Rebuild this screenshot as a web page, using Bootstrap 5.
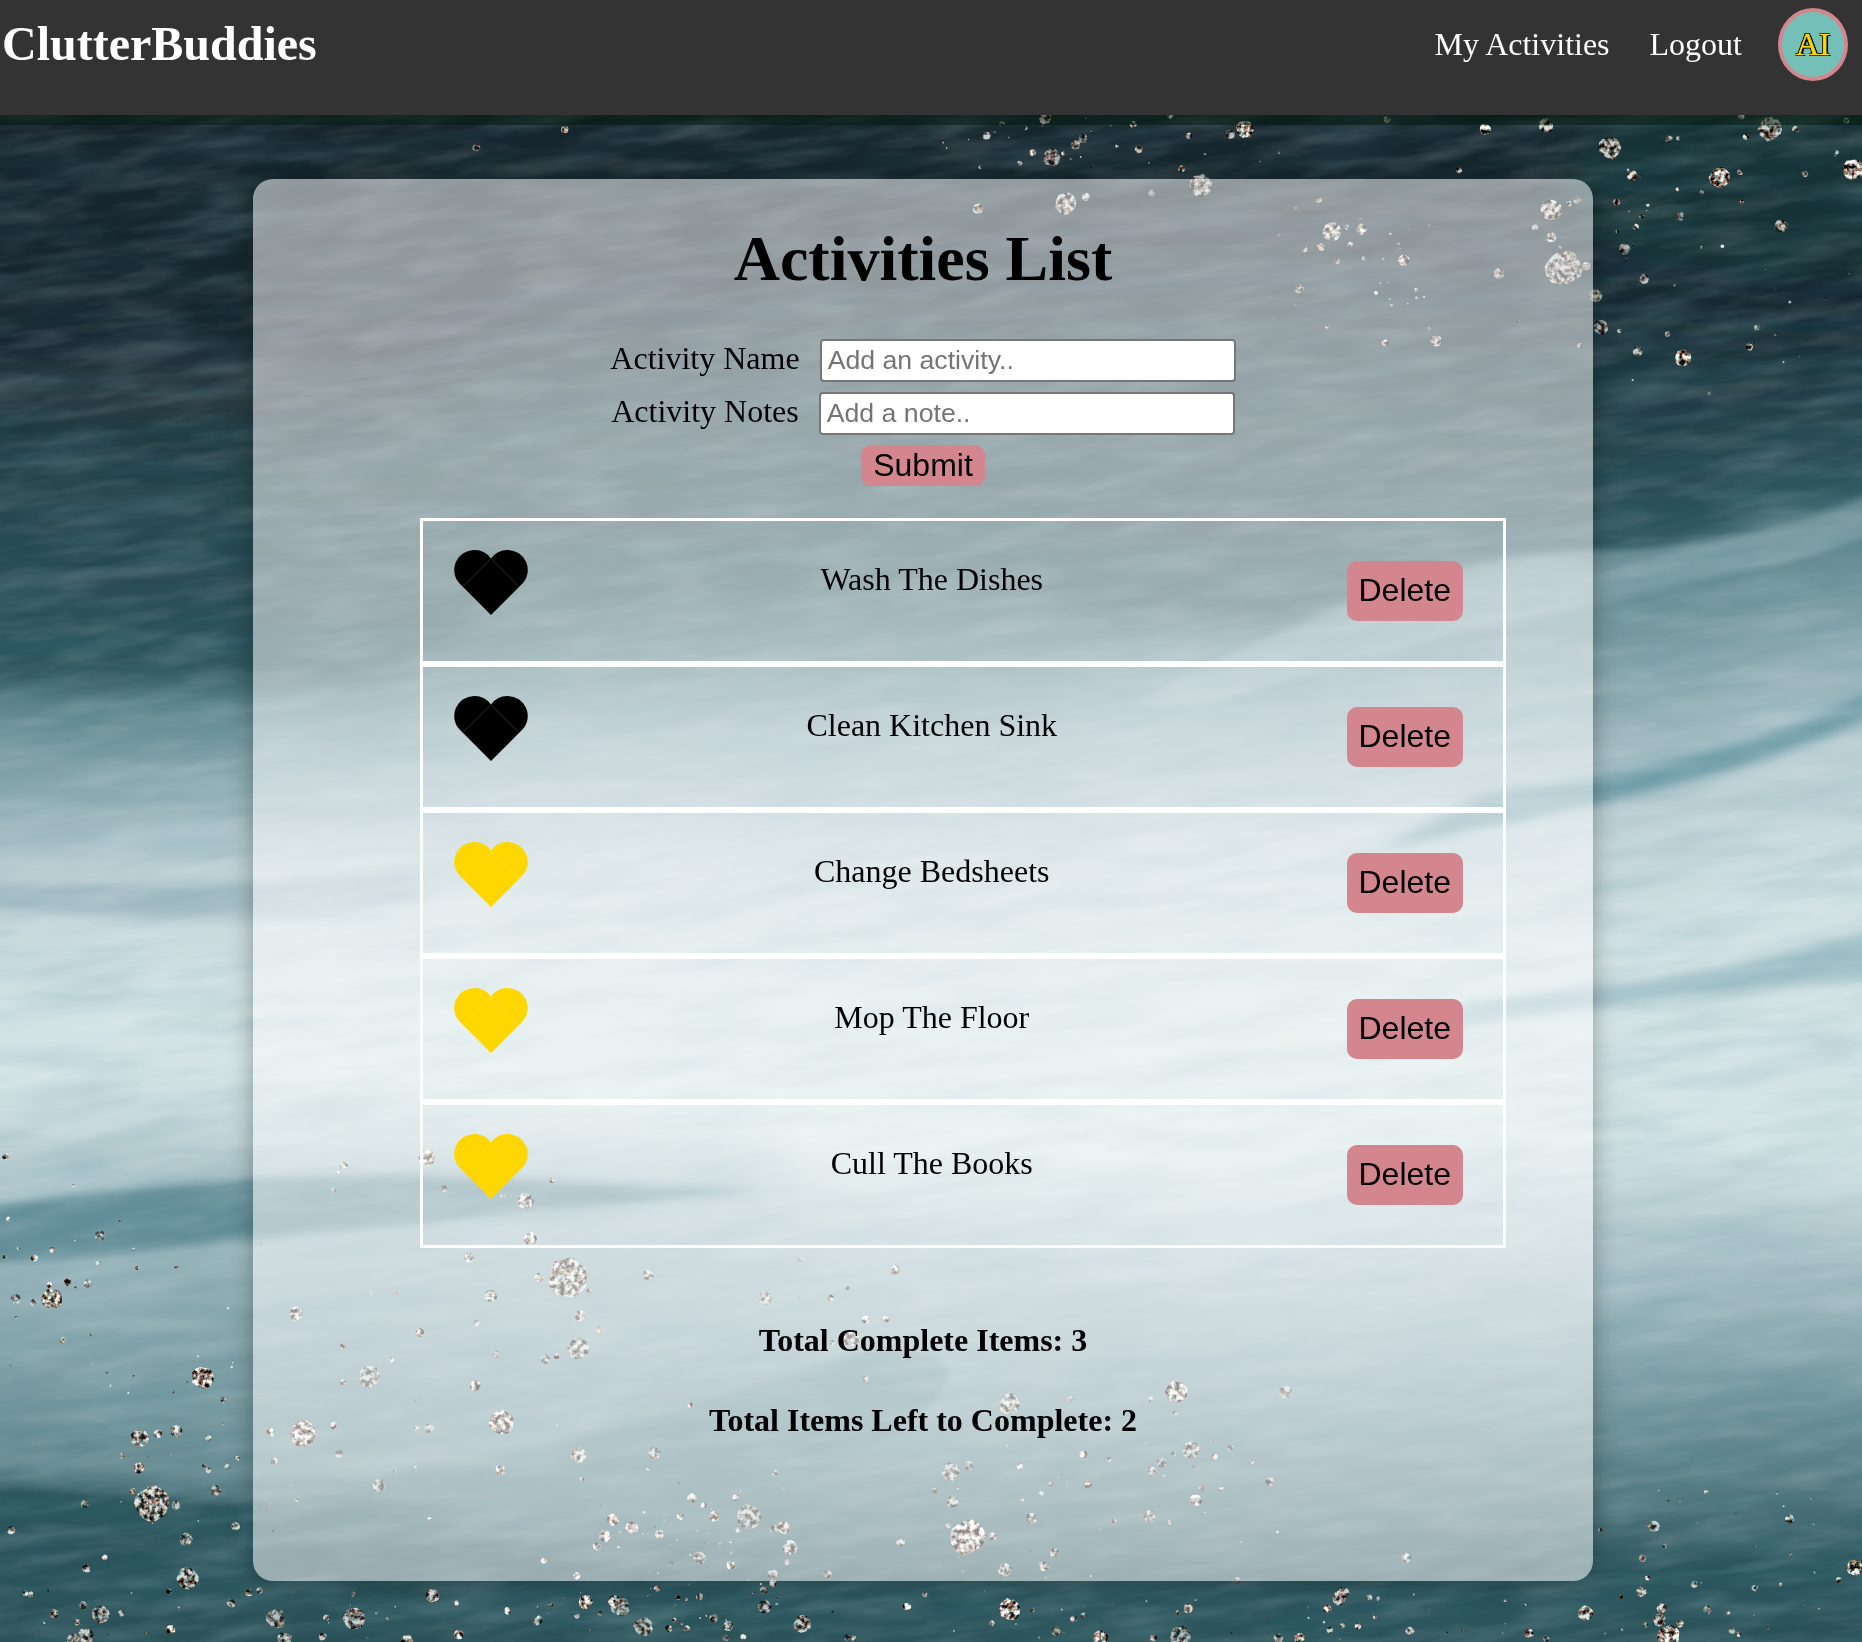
<!DOCTYPE html>
<html lang="en">
<head>
<meta charset="utf-8">
<title>ClutterBuddies</title>
<link href="https://cdn.jsdelivr.net/npm/bootstrap@5.3.0/dist/css/bootstrap.min.css" rel="stylesheet">
<style>
body{font-family:"Liberation Serif",serif;font-size:32px;line-height:40px;color:#000;background:#14242c;height:1642px;overflow:hidden}
.backdrop{z-index:-1}
.topbar{height:115px;background:#333;box-shadow:0 10px 0 rgba(0,24,8,.5);padding-right:14px}
.brandname{font-size:48px;line-height:48px;padding:20px 0 0 2px}
.toplinks{padding-top:8px}
.toplinks a{padding:16px 20px 0;white-space:nowrap}
.avatar{width:70px;height:73px;margin-left:16px;border:4px solid #d4868f;background:#74c0b8;color:gold;-webkit-text-stroke:.5px gold;text-shadow:-1px -1px 0 #000,1px -1px 0 #000,-1px 1px 0 #000,1px 1px 0 #000,2px 1px 0 #000;padding-bottom:2px}
.panel{width:1340px;height:1402px;margin:64px 0 0 253px;border-radius:20px;background:rgba(255,255,255,.52);box-shadow:0 0 25px rgba(0,0,0,.32)}
.paneltitle{font-size:64px;line-height:70px;margin:45px 0 45px}
.fieldrow{height:43px;gap:20px;margin-bottom:10px}
.fieldrow label{padding-bottom:5px}
.textfield{width:416px;height:43px;border:2px solid #767676;border-radius:4px;padding:0 6px 1px;font:26.67px "Liberation Sans",sans-serif;background:#fff}
.textfield::placeholder{color:#757575;opacity:1}
.pinkbtn{background:#d4868f;border:0;border-radius:10px;color:#000;font:32px/36px "Liberation Sans",sans-serif;padding:0 12px 2px}
.sendbtn{height:41px}
.delbtn{height:60px;margin-top:40px}
.todo{width:1086px;margin:32px 0 0 167px}
.todo li{height:146px;border:3px solid #fff;padding:0 40px 0 31px}
.heartbox{width:63px;padding-top:29px}
.heartbox svg{display:block;overflow:visible}
.todoname{margin-top:38px}
.totals{margin-top:72px;gap:40px}
</style>
<script src="https://cdn.jsdelivr.net/npm/bootstrap@5.3.0/dist/js/bootstrap.bundle.min.js"></script>
</head>
<body class="m-0">
<svg class="backdrop position-fixed top-0 start-0" width="1862" height="1642" aria-hidden="true">
  <defs>
    <filter id="soft" x="-5%" y="-5%" width="110%" height="110%"><feGaussianBlur stdDeviation="3"/></filter>
    <filter id="wash" x="-5%" y="-5%" width="110%" height="110%"><feGaussianBlur stdDeviation="10 5"/></filter>
    <filter id="softer" x="-20%" y="-50%" width="140%" height="200%"><feGaussianBlur stdDeviation="14"/></filter>
    <filter id="brush" x="0" y="0" width="100%" height="100%"><feTurbulence type="fractalNoise" baseFrequency=".012 .06" numOctaves="4" seed="8"/><feColorMatrix values="0 0 0 0 .8  0 0 0 0 .88  0 0 0 0 .9  1.3 0 0 0 -.5"/></filter>
    <filter id="shade" x="0" y="0" width="100%" height="100%"><feTurbulence type="fractalNoise" baseFrequency=".008 .045" numOctaves="4" seed="21"/><feColorMatrix values="0 0 0 0 .08  0 0 0 0 .25  0 0 0 0 .3  1.3 0 0 0 -.5"/></filter>
    <filter id="glitter" x="0" y="0" width="1862" height="1642" filterUnits="userSpaceOnUse" color-interpolation-filters="sRGB">
      <feTurbulence type="fractalNoise" baseFrequency=".2" numOctaves="3" seed="5"/>
      <feColorMatrix values="2.6 .5 0 0 -.93  2.9 0 .3 0 -1.02  2.9 0 .5 0 -1.16  0 0 0 0 1"/>
      <feComposite in2="SourceGraphic" operator="in"/>
    </filter>
  </defs>
  <g id="bands" filter="url(#soft)"></g>
  <g filter="url(#wash)">
    <path d="M1480 795 C1640 770 1780 745 1900 675 L1900 700 C1800 760 1650 795 1380 850Z" fill="#5d929f" opacity=".75"/>
    <path d="M1480 1000 C1650 985 1760 965 1900 920 L1900 980 C1760 985 1650 1000 1400 1035Z" fill="#7fa9b7" opacity=".55"/>
    <path d="M-40 1212 C100 1190 200 1176 420 1175 L760 1190 C450 1222 220 1240 100 1255 L-40 1266Z" fill="#4c7c88" opacity=".72"/>
    <path d="M-40 880 C100 890 250 885 420 870 L420 900 C250 925 100 920 -40 905Z" fill="#86a3b0" opacity=".4"/>
    <path d="M-40 1443 C150 1470 350 1480 600 1400 L600 1425 C450 1480 300 1490 -40 1462Z" fill="#a3c0c4" opacity=".22"/>
  </g>
  <g filter="url(#soft)">
    <path d="M240 1505 C450 1495 640 1420 870 1350 C1050 1340 900 1480 600 1540 L240 1545Z" fill="#47757f" opacity=".4"/>
    <path d="M1130 705 C1300 615 1450 552 1600 550 C1700 550 1800 525 1880 490 L1880 530 C1780 580 1500 600 1200 710Z" fill="#a5bfc6" opacity=".4"/>
  </g>
  <ellipse cx="1780" cy="180" rx="220" ry="100" fill="#12433f" opacity=".45" filter="url(#softer)"/>
  <ellipse cx="160" cy="385" rx="200" ry="38" fill="#4a5357" opacity=".3" filter="url(#softer)"/>
  <g transform="rotate(-7 931 821)">
    <rect x="-150" y="-150" width="2162" height="1942" filter="url(#brush)" opacity=".24"/>
    <rect x="-150" y="-150" width="2162" height="1942" filter="url(#shade)" opacity=".26"/>
  </g>
  <g id="flakes" filter="url(#glitter)"></g>
</svg>

<header class="topbar d-flex justify-content-between align-items-start text-white">
  <div class="brandname fw-bold">ClutterBuddies</div>
  <nav class="toplinks d-flex align-items-start">
    <a class="text-white text-decoration-none" href="#">My Activities</a>
    <a class="text-white text-decoration-none" href="#">Logout</a>
    <div class="avatar rounded-circle text-center d-flex flex-column justify-content-center">AI</div>
  </nav>
</header>

<main class="panel d-flex flex-column">
  <h1 class="paneltitle text-center fw-bold">Activities List</h1>
  <form class="d-flex flex-column align-items-center">
    <div class="fieldrow d-flex align-items-center"><label for="an">Activity Name</label><input id="an" class="textfield" placeholder="Add an activity.."></div>
    <div class="fieldrow d-flex align-items-center"><label for="no">Activity Notes</label><input id="no" class="textfield" placeholder="Add a note.."></div>
    <button type="button" class="pinkbtn sendbtn">Submit</button>
  </form>
  <ul class="todo list-unstyled" id="todo"></ul>
  <div class="totals d-flex flex-column text-center fw-bold">
    <div>Total Complete Items: 3</div>
    <div>Total Items Left to Complete: 2</div>
  </div>
</main>

<script>
// Activity rows
const rows=[["Wash The Dishes","#000","#2b2b2b"],["Clean Kitchen Sink","#000","#2b2b2b"],["Change Bedsheets","#ffd700","#ffdc28"],["Mop The Floor","#ffd700","#ffdc28"],["Cull The Books","#ffd700","#ffdc28"]];
document.getElementById("todo").innerHTML=rows.map(([name,fill,seam])=>`
<li class="d-flex align-items-start">
  <div class="heartbox flex-shrink-0"><svg width="74" height="65" viewBox="0 0 74 65"><path fill="${fill}" d="M37 65 L5.6 33.6 A20 20 0 0 1 20 0 A20 20 0 0 1 37 8.6 A20 20 0 0 1 54 0 A20 20 0 0 1 68.4 33.6Z"/><path fill="none" stroke="${seam}" d="M9 36.6 L37 8.6 L65 36.6"/></svg></div>
  <div class="todoname flex-grow-1 text-center">${name}</div>
  <button type="button" class="pinkbtn delbtn">Delete</button>
</li>`).join("");

// Painted bands: each contour is a colour with its height at seven stations across the page
const xs=[-40,310,620,930,1240,1550,1902];
const bands=[
[[18,36,44],[90,90,90,90,90,90,90]],
[[21,40,48],[350,360,290,250,230,260,300]],
[[36,66,74],[460,470,410,400,400,430,400]],
[[46,86,94],[672,665,590,570,610,545,485]],
[[94,134,141],[705,705,680,670,645,572,530]],
[[140,170,177],[790,770,740,735,710,690,640]],
[[190,209,214],[880,860,850,860,830,820,740]],
[[210,226,228],[1000,980,980,1000,980,950,900]],
[[212,228,229],[1080,1070,1100,1150,1150,1130,1150]],
[[175,198,204],[1180,1170,1170,1230,1260,1240,1240]],
[[142,172,179],[1310,1290,1320,1350,1350,1340,1330]],
[[105,142,149],[1430,1450,1450,1450,1440,1430,1410]],
[[84,122,129],[1474,1494,1500,1500,1500,1490,1480]],
[[44,84,92],[1492,1510,1570,1590,1590,1570,1560]],
[[42,80,88],[1660,1660,1660,1660,1660,1660,1660]]];
let out="";
const mix=(a,b,t)=>a+(b-a)*t;
for(let i=0;i<bands.length-1;i++)for(let k=0;k<12;k++){
  const t=k/12,c=bands[i][0].map((v,j)=>Math.round(mix(v,bands[i+1][0][j],t))),y=bands[i][1].map((v,j)=>mix(v,bands[i+1][1][j],t));
  let d=`M${xs[0]} ${y[0]}`;
  for(let j=1;j<7;j++){const m=(xs[j-1]+xs[j])/2;d+=`C${m} ${y[j-1]} ${m} ${y[j]} ${xs[j]} ${y[j]}`}
  out+=`<path d="${d}V1700H-40Z" fill="rgb(${c})"/>`;
}
document.getElementById("bands").innerHTML=out;

// Glitter flakes, grouped by area: origin, scale, then x y r triples
const areas=[
[1380,0,1/3,1/3,"20 358 8 315 388 15 498 378 20 690 443 31 757 527 14 867 417 10 895 415 6 1085 345 12 1098 410 9 1170 388 32 1247 388 10 1399 362 8 1370 457 6 1420 508 28 1020 533 29 1080 517 8 1275 522 9 1351 520 3 237 511 8 514 630 28 567 611 8 592 600 11 465 682 9 514 712 14 540 741 5 551 803 49 619 799 12 646 887 18 71 781 16 356 821 15 710 606 9 804 615 5 785 649 7 767 680 9 733 747 16 712 695 5 792 837 13 901 649 12 892 568 5 965 577 6 1086 605 6 1203 678 18 965 742 4 1027 739 5 663 982 20 718 993 6 863 1002 8 773 1054 14 909 1074 22 1108 1041 10 1131 983 8 1120 1026 4 169 1023 16 601 1037 8 988 1180 5 15 1028 9 146 986 5 415 964 4 745 510 4 108 870 6"],
[900,100,1/1.63,1/1.425,"141 51 6 166 34 4 236 26 9 205 40 3 247 82 13 216 75 5 286 64 7 298 55 7 354 66 3 389 70 6 380 35 5 441 22 5 471 51 5 539 49 7 562 42 13 459 98 5 490 122 17 127 155 8 270 148 16 303 138 6 410 133 5 682 142 5 645 154 2 704 188 14 752 184 8 728 181 4 686 210 6 660 213 4 734 206 4 651 269 7 714 230 4 756 226 3 776 275 3 696 323 3 801 292 2 195 90 4 266 76 3 131 96 3 794 28 5 955 43 7"],
[0,100,1/2.53,1/1.425,"1205 68 9 1429 42 9"],
[0,1120,1/2.53,1/3,"14 110 9 186 197 5 870 138 11 855 159 5 844 209 8 1080 112 23 1122 206 9 1397 181 8 1272 227 7 1329 243 22 1342 356 18 1187 413 14 20 296 6 253 347 14 132 390 8 87 414 10 47 385 5 12 410 6 248 428 7 347 444 5 171 487 11 222 491 11 132 537 28 40 537 14 84 547 9 125 495 8 158 661 9 230 644 4 513 773 30 565 840 8 354 955 25 400 941 12 446 932 17 527 954 9 310 1007 8 352 1044 15 384 1150 47 445 1156 12 336 1113 8 214 1152 11 545 1112 15 596 1219 12 470 1257 18 28 1231 11 219 1345 12 265 1312 8 475 1375 30 527 1050 8 575 1040 8 600 1016 7 516 1039 6 64 1420 8 78 1424 8 137 1481 12 210 1457 12 255 1482 24 307 1480 9 427 1415 8 195 1506 9 432 1528 13 215 1550 24 185 1560 18 585 1450 12 630 1418 10 657 1411 9 697 1497 27 720 1557 20 825 1493 9 893 1422 7 895 1497 30 1094 1426 19 1155 1449 7 1284 1472 10 1360 1501 14 1160 1545 13 816 1550 11 1030 1562 18 1436 473 54 1364 472 12 1490 512 7 1242 527 17 1468 587 15 1517 628 10 1463 685 29 1380 718 13 1408 709 8 1206 610 9 749 581 19 1062 638 12 866 678 7 937 519 6 1000 519 5 991 720 7 868 787 9 933 771 31 1203 797 15 1257 703 10 1268 906 34 767 941 36 844 917 10 685 934 11 1085 925 13 1054 926 8 857 1001 11 694 1024 10 959 1096 17 1266 1050 14 1464 1005 22 1472 1079 7 752 1138 7 1087 1198 6 1550 1199 16 1530 1248 17 1376 1322 9 1510 1280 11 1460 1368 10 1481 1445 19 1555 1445 17 1518 1480 7 1460 1487 8 1397 1455 6"],
[600,1220,1/2.45,1/3,"118 165 15 404 236 18 722 151 14 606 204 6 491 119 6 565 234 9 490 237 5 650 299 11 700 298 9 615 355 23 569 368 7 650 477 9 220 555 8 1003 553 29 1152 535 8 1413 515 30 1351 537 8 1410 578 7 133 700 17 118 746 5 428 758 8 860 755 25 904 737 13 820 812 8 864 845 16 1028 738 9 1184 703 11 1247 718 7 1449 690 24 1376 728 14 1406 701 7 1506 711 9 1545 684 9 1352 754 14 1104 793 7 1082 820 8 1196 794 10 1034 838 6 902 950 48 962 949 11 852 917 8 1057 895 15 1460 840 17 1473 805 8 1521 805 7 1347 889 16 1259 903 7 1113 998 13 1087 1038 14 992 1050 19 736 966 12 558 1063 11 364 889 34 333 832 10 280 889 14 225 834 13 254 856 8 197 889 10 145 942 13 78 923 17 32 900 16 13 948 15 450 923 17 425 926 11 465 983 21 458 1026 8 424 1062 14 338 930 8 244 1013 17 320 1035 12 174 1029 6 402 1110 11 424 1090 10 403 1160 18 496 1212 24 244 1130 10 50 1160 26 106 1220 26 140 1106 9 191 1133 7 168 1226 10 213 1226 9 278 1196 12 314 1218 14 308 1254 9 351 1250 8 752 1160 11 796 1123 8 1004 1167 30 1060 1170 6 960 1210 8 1118 1233 13 1185 1186 8 1160 1197 9 1226 1252 20 1356 1254 10 1422 1250 30 1441 1165 14 1416 1178 7 605 1252 9 621 1255 8 1561 1080 8 182 1200 6"],
[1240,1120,1/2.52,1/3,"115 816 17 75 1085 12 418 1313 13 30 1024 7 94 1236 4 1043 1218 16 1385 1198 13 1175 1116 6 908 1230 6 1070 1278 6 1014 1315 10 1027 1374 7 1012 1415 14 1145 1393 10 1297 1404 9 1362 1394 5 1549 1343 22 1509 1380 8 1388 1304 5 871 1480 21 1063 1465 13 1058 1500 18 1080 1550 31 1109 1512 10 1022 1515 7 1179 1469 12 1231 1477 6 1240 1532 9 1256 1543 7 250 1435 19 260 1418 16 325 1433 9 348 1436 6 221 1467 11 258 1518 8 226 1530 9 297 1518 9 428 1533 12 97 1554 13 150 1556 15 729 1540 13 772 1555 9 340 1492 6 210 1506 5 960 1431 6"]];
let seed=7;const rnd=()=>(seed=seed*16807%2147483647)/2147483647;
let dots="";
for(const [ox,oy,sx,sy,s] of areas){
  const n=s.split(" ").map(Number);
  for(let i=0;i<n.length;i+=3){
    const x=ox+n[i]*sx,y=oy+n[i+1]*sy,r=n[i+2]*Math.min(sx,sy)*1.1,pts=[];
    for(let k=0;k<14;k++){const a=k*Math.PI/7,q=.9+rnd()*.18;pts.push((x+Math.cos(a)*r*q).toFixed(1)+","+(y+Math.sin(a)*r*q).toFixed(1))}
    dots+=`<polygon points="${pts.join(" ")}" opacity="${(.6+rnd()*.4).toFixed(2)}"/>`;
  }
}
// Dust between the larger flakes
for(const [x,y,w,h,n] of [[940,118,360,50,18],[1260,210,180,130,20],[1600,120,250,260,20],[0,1200,300,200,20],[120,1350,480,200,30],[590,1480,200,150,60],[930,1440,340,180,28],[0,1590,1862,50,60],[1640,1490,220,100,16]])
  for(let i=0;i<n;i++)dots+=`<circle cx="${(x+rnd()*w).toFixed(1)}" cy="${(y+rnd()*h).toFixed(1)}" r="${(.6+rnd()*.9).toFixed(1)}" opacity=".7"/>`;
document.getElementById("flakes").innerHTML=dots;
</script>
</body>
</html>
